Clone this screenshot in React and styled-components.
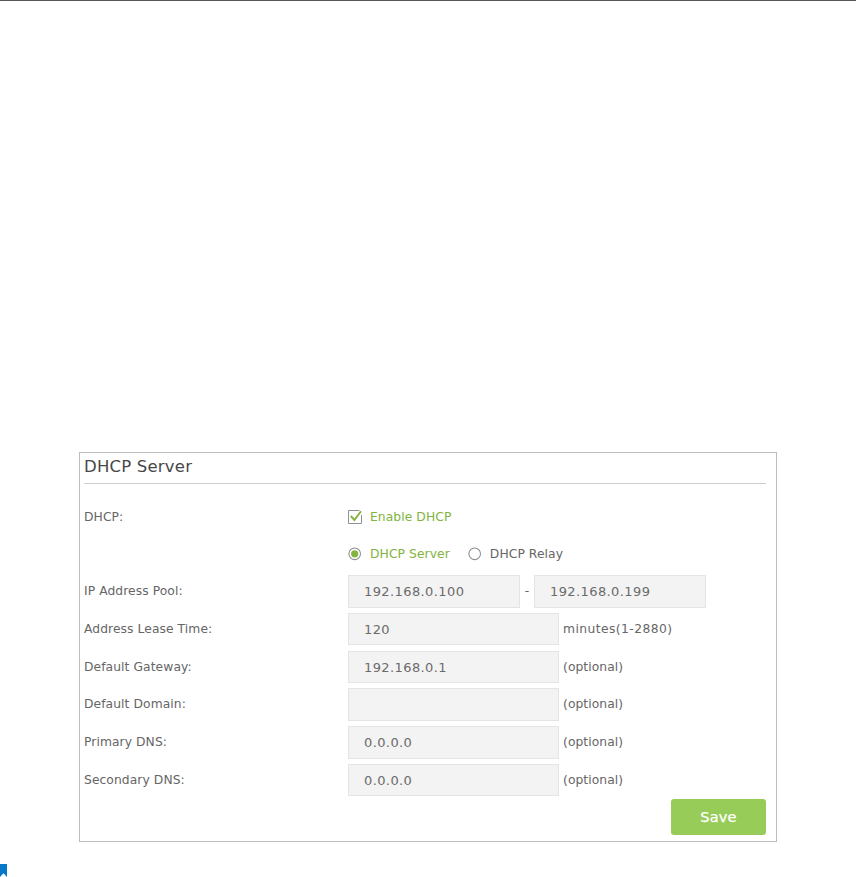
import React from "react";
import styled, { createGlobalStyle } from "styled-components";

const GlobalStyle = createGlobalStyle`
  * { box-sizing: border-box; }
  body { margin: 0; background: #fff; overflow: hidden; }
`;

const Page = styled.main`
  height: 877px;
  display: flex;
  flex-direction: column;
  border-top: 1px solid #555;
  font-family: "DejaVu Sans", Verdana, sans-serif;
  font-size: 12.3px;
  color: #666;
`;

const Panel = styled.section`
  width: 698px;
  height: 390px;
  margin: 451px 0 0 79px;
  padding: 0 10px 0 4px;
  border: 1px solid #bdbdbd;
  display: flex;
  flex-direction: column;
`;

const Title = styled.h1`
  margin: 0 0 15px;
  height: 31px;
  flex: none;
  border-bottom: 1px solid #cecece;
  font-size: 16.5px;
  line-height: 28px;
  font-weight: 400;
  letter-spacing: 0.2px;
  color: #484848;
`;

const Row = styled.div`
  display: grid;
  grid-template-columns: 264px 1fr;
  height: ${(p) => p.$height}px;
  flex: none;
`;

const Label = styled.span`
  line-height: ${(p) => p.$line || 32}px;
  white-space: nowrap;
  letter-spacing: 0.08px;
`;

const Controls = styled.div`
  display: flex;
  align-items: flex-start;
`;

const Choice = styled.label`
  display: flex;
  align-items: center;
  height: ${(p) => p.$height || 36}px;
  gap: ${(p) => p.$gap}px;
  margin-right: 18px;
  color: ${(p) => (p.$active ? "#82b440" : "#666")};
  letter-spacing: 0.08px;
`;

const Field = styled.input`
  width: ${(p) => (p.$short ? 172 : 211)}px;
  height: 32.5px;
  padding: 1px 15px 0;
  border: 1px solid #e4e4e4;
  border-radius: 0;
  outline: none;
  background: #f3f3f3;
  color: #6b6b6b;
  font: 13px "DejaVu Sans", Verdana, sans-serif;
  letter-spacing: 0.4px;
`;

const Dash = styled.span`
  width: 14px;
  line-height: 32px;
  text-align: center;
`;

const Hint = styled(Label)`
  margin-left: 4px;
  letter-spacing: ${(p) => (p.$wide ? 0.43 : 0.08)}px;
`;

const Save = styled.button`
  align-self: flex-end;
  flex: none;
  width: 95px;
  height: 36px;
  margin-top: -3px;
  padding: 0;
  border: 0;
  border-radius: 3px;
  background: #98cc58;
  color: #fff;
  font: 14.5px "DejaVu Sans", Verdana, sans-serif;
  letter-spacing: 0.2px;
  -webkit-text-stroke: 0.25px #fff;
`;

const Bookmark = styled.svg`
  display: block;
  margin-top: 22px;
`;

const Check = () => (
  <svg width="14" height="14" viewBox="0 0 14 14" fill="none">
    <path d="M13.5 5v8.5H.5V.5h11" stroke="#8b9296" />
    <path d="M2.8 6l3.6 4L13 1.2" stroke="#82b440" strokeWidth="1.9" />
  </svg>
);

const Radio = ({ on }) => (
  <svg width="14" height="14" viewBox="0 0 14 14" fill="none">
    <circle cx="6.7" cy="6.8" r="5.8" stroke="#8f8f8f" strokeWidth="1.1" />
    {on && <circle cx="6.7" cy="6.8" r="3.6" fill="#82b440" />}
  </svg>
);

const rows = [
  { label: "Address Lease Time:", value: "120", hint: "minutes(1-2880)", wide: true },
  { label: "Default Gateway:", value: "192.168.0.1", hint: "(optional)" },
  { label: "Default Domain:", value: "", hint: "(optional)" },
  { label: "Primary DNS:", value: "0.0.0.0", hint: "(optional)" },
  { label: "Secondary DNS:", value: "0.0.0.0", hint: "(optional)" },
];

export default function App() {
  return (
    <>
      <GlobalStyle />
      <Page>
        <Panel>
          <Title>DHCP Server</Title>
          <Row $height={38}>
            <Label $line={36}>DHCP:</Label>
            <Controls>
              <Choice $active $gap={8}>
                <Check />
                Enable DHCP
              </Choice>
            </Controls>
          </Row>
          <Row $height={38}>
            <span />
            <Controls>
              <Choice $active $gap={8} $height={34}>
                <Radio on />
                DHCP Server
              </Choice>
              <Choice $gap={8} $height={34}>
                <Radio />
                DHCP Relay
              </Choice>
            </Controls>
          </Row>
          <Row $height={37.8}>
            <Label>IP Address Pool:</Label>
            <Controls>
              <Field $short defaultValue="192.168.0.100" />
              <Dash>-</Dash>
              <Field $short defaultValue="192.168.0.199" />
            </Controls>
          </Row>
          {rows.map((row) => (
            <Row key={row.label} $height={37.8}>
              <Label>{row.label}</Label>
              <Controls>
                <Field defaultValue={row.value} />
                <Hint $wide={row.wide}>{row.hint}</Hint>
              </Controls>
            </Row>
          ))}
          <Save type="button">Save</Save>
        </Panel>
        <Bookmark width="7" height="13" viewBox="0 0 7 13">
          <path d="M0 0h7v13L3.5 9.2 0 13z" fill="#0878c9" />
        </Bookmark>
      </Page>
    </>
  );
}
